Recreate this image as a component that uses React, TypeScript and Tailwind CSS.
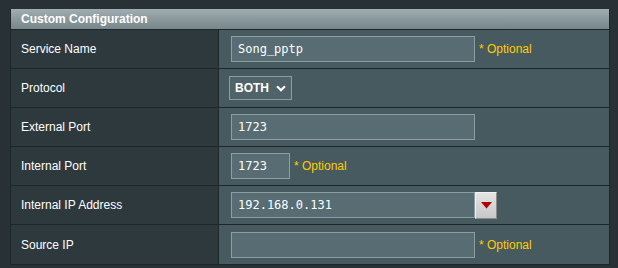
import React from 'react';

type Row = {
  label: string;
  field: React.ReactNode;
};

const Optional = () => (
  <span className="ml-[4px] text-[12px] text-[#ffcc00]" style={{ fontFamily: 'Arial' }}>
    * Optional
  </span>
);

const TextBox = ({ value, width }: { value: string; width: string }) => (
  <div
    className={`${width} h-[26px] flex items-center px-[6px] bg-[#576d73] border border-[#8d9ea2] text-white text-[12px]`}
    style={{ fontFamily: '"DejaVu Sans Mono", "Liberation Mono", monospace' }}
  >
    {value}
  </div>
);

const App: React.FC = () => {
  const rows: Row[] = [
    {
      label: 'Service Name',
      field: (
        <>
          <TextBox value="Song_pptp" width="w-[244px]" />
          <Optional />
        </>
      ),
    },
    {
      label: 'Protocol',
      field: (
        <div className="ml-[-2px] w-[63px] h-[24px] flex items-center justify-between pl-[5px] pr-[5px] bg-[#4f6369] border border-[#8d9ea2] text-white text-[12px] font-bold">
          <span>BOTH</span>
          <svg width="10" height="7" viewBox="0 0 10 7">
            <path d="M1 1.2 L5 5.2 L9 1.2" fill="none" stroke="#fff" strokeWidth="2.2" />
          </svg>
        </div>
      ),
    },
    {
      label: 'External Port',
      field: <TextBox value="1723" width="w-[244px]" />,
    },
    {
      label: 'Internal Port',
      field: (
        <>
          <TextBox value="1723" width="w-[59px]" />
          <Optional />
        </>
      ),
    },
    {
      label: 'Internal IP Address',
      field: (
        <>
          <TextBox value="192.168.0.131" width="w-[244px]" />
          <div className="w-[22px] h-[27px] flex items-center justify-center bg-gradient-to-b from-[#e4e4e4] to-[#c8c8c8] border border-t-[#f4f4f4] border-l-[#f0f0f0] border-r-[#8a8a8a] border-b-[#8a8a8a]">
            <svg width="11" height="7" viewBox="0 0 11 7">
              <path d="M0 0 H11 L5.5 6.5 Z" fill="#b00000" />
            </svg>
          </div>
        </>
      ),
    },
    {
      label: 'Source IP',
      field: (
        <>
          <TextBox value="" width="w-[244px]" />
          <Optional />
        </>
      ),
    },
  ];

  return (
    <div
      className="w-[618px] h-[268px] bg-[#283236] pt-[9px] pl-[10px]"
      style={{ fontFamily: 'Arial, "Liberation Sans", sans-serif' }}
    >
      <div className="w-[600px] border-x border-b border-[#1d2629]">
        <div className="h-[21px] flex items-center pl-[10px] bg-gradient-to-b from-[#a0adb2] to-[#77868b] border-b border-[#1d2629] text-white text-[12px] font-bold">
          Custom Configuration
        </div>
        {rows.map((row, i) => (
          <div
            key={row.label}
            className={`flex h-[39px] ${i < rows.length - 1 ? 'border-b border-[#1d2629]' : 'h-[38px]'}`}
          >
            <div className="w-[208px] flex items-center pl-[10px] bg-[#2e393d] border-r border-[#1d2629] text-white text-[12px]">
              {row.label}
            </div>
            <div className="flex-1 flex items-center pl-[12px] bg-[#475a5f]">{row.field}</div>
          </div>
        ))}
      </div>
    </div>
  );
};

export default App;
